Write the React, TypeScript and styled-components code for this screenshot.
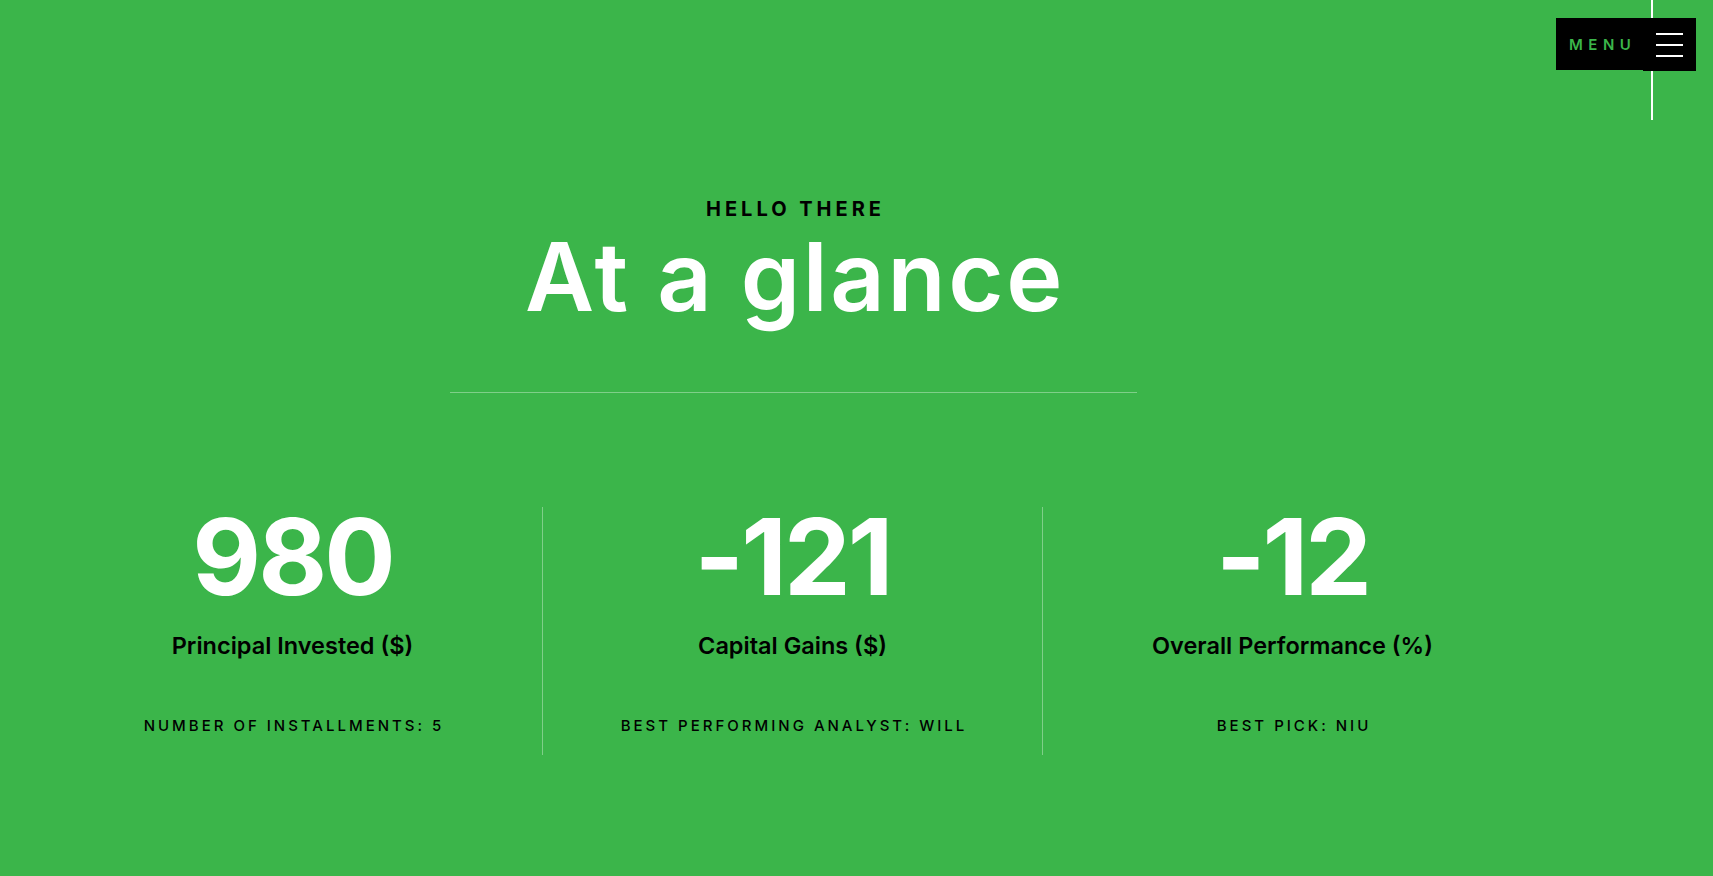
import React from "react";
import styled, { createGlobalStyle } from "styled-components";

const GREEN = "#3bb54a";
const FONT = `"Inter", "Noto Sans", "DejaVu Sans", sans-serif`;

const Global = createGlobalStyle`
  html, body { margin: 0; padding: 0; background: ${GREEN}; }
  body { font-family: ${FONT}; }
  * { box-sizing: border-box; }
`;

const Page = styled.div`
  position: relative;
  min-height: 876px;
  background: ${GREEN};
  overflow: hidden;
  padding-top: 197px;
`;

const MenuRail = styled.div`
  position: absolute;
  top: 0;
  left: 1651px;
  width: 2px;
  height: 120px;
  background: #fff;
`;

const MenuButton = styled.button`
  position: absolute;
  top: 18px;
  left: 1556px;
  display: flex;
  align-items: flex-start;
  border: 0;
  padding: 0;
  background: transparent;
  cursor: pointer;
`;

const MenuLabel = styled.span`
  display: flex;
  align-items: center;
  width: 87px;
  height: 52px;
  padding-left: 13px;
  background: #000;
  color: ${GREEN};
  font-family: ${FONT};
  font-weight: 600;
  font-size: 15px;
  letter-spacing: 5.5px;
`;

const Burger = styled.span`
  display: flex;
  flex-direction: column;
  justify-content: center;
  gap: 9px;
  width: 53px;
  height: 53px;
  padding-left: 13px;
  background: #000;
`;

const BurgerLine = styled.span`
  display: block;
  width: 27px;
  height: 2px;
  background: #fff;
`;

const Hero = styled.header`
  width: 687px;
  margin-left: 450px;
  display: flex;
  flex-direction: column;
  align-items: stretch;
`;

const HeroTitles = styled.div`
  display: flex;
  flex-direction: column;
  align-items: center;
`;

const Eyebrow = styled.div`
  font-size: 20px;
  font-weight: 700;
  letter-spacing: 4px;
  line-height: 24px;
  color: #000;
  margin-right: -4px;
`;

const Title = styled.h1`
  margin: 1px -3px 0 0;
  font-size: 95px;
  font-weight: 600;
  line-height: 110px;
  color: #fff;
  letter-spacing: 2.6px;
`;

const Rule = styled.hr`
  margin: 60px 0 0;
  border: 0;
  height: 1px;
  background: rgba(255, 255, 255, 0.35);
`;

const Stats = styled.section`
  margin: 114px 0 0 42px;
  display: grid;
  grid-template-columns: repeat(3, 500px);
`;

const Stat = styled.div<{ $divided?: boolean }>`
  height: 248px;
  display: flex;
  flex-direction: column;
  align-items: center;
  border-left: 1px solid ${(p) => (p.$divided ? "rgba(255,255,255,0.35)" : "transparent")};
`;

const Value = styled.div`
  font-size: 106px;
  font-weight: 700;
  line-height: 100px;
  color: #fff;
  letter-spacing: -3px;
`;

const Label = styled.div`
  margin-top: 24px;
  font-size: 23.5px;
  font-weight: 600;
  line-height: 30px;
  color: #000;
`;

const Note = styled.div`
  margin-top: 55px;
  font-size: 15px;
  font-weight: 500;
  letter-spacing: 3px;
  line-height: 20px;
  color: #000;
  margin-right: -3px;
`;

const stats = [
  { value: "980", label: "Principal Invested ($)", note: "NUMBER OF INSTALLMENTS: 5" },
  { value: "-121", label: "Capital Gains ($)", note: "BEST PERFORMING ANALYST: WILL" },
  { value: "-12", label: "Overall Performance (%)", note: "BEST PICK: NIU" },
];

export default function App() {
  return (
    <Page>
      <Global />
      <MenuRail />
      <MenuButton aria-label="Menu">
        <MenuLabel>MENU</MenuLabel>
        <Burger>
          <BurgerLine />
          <BurgerLine />
          <BurgerLine />
        </Burger>
      </MenuButton>
      <Hero>
        <HeroTitles>
          <Eyebrow>HELLO THERE</Eyebrow>
          <Title>At a glance</Title>
        </HeroTitles>
        <Rule />
      </Hero>
      <Stats>
        {stats.map((s, i) => (
          <Stat key={s.value} $divided={i > 0}>
            <Value>{s.value}</Value>
            <Label>{s.label}</Label>
            <Note>{s.note}</Note>
          </Stat>
        ))}
      </Stats>
    </Page>
  );
}
